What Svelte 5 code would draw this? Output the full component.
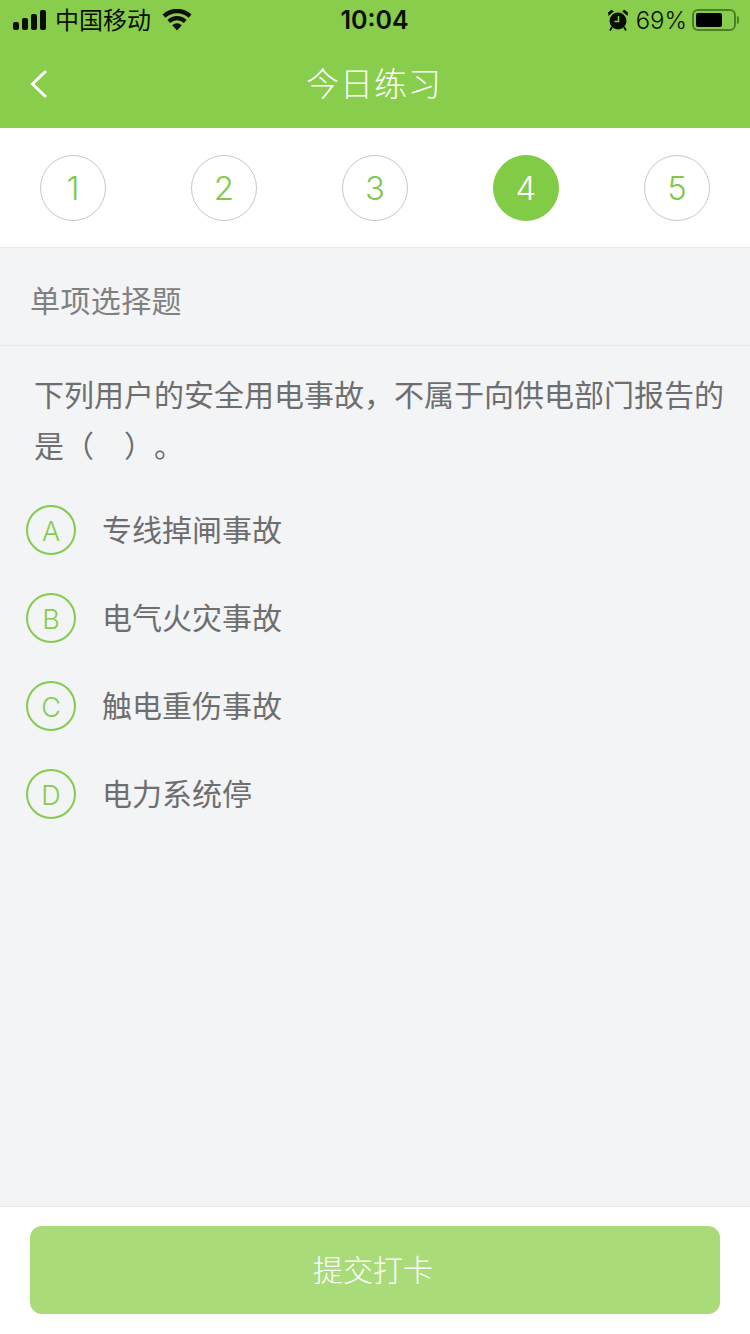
<script>
  const steps = [1, 2, 3, 4, 5];
  const current = 4;
  const options = [
    { key: "A", text: "专线掉闸事故" },
    { key: "B", text: "电气火灾事故" },
    { key: "C", text: "触电重伤事故" },
    { key: "D", text: "电力系统停" }
  ];
  const bars = [8, 12, 16, 20];
</script>

<div class="page">
  <header class="header">
    <div class="status">
      <div class="status-left">
        <div class="signal">
          {#each bars as h}
            <span style="height: {h}px"></span>
          {/each}
        </div>
        <span class="carrier">中国移动</span>
        <svg class="wifi" width="30" height="22" viewBox="0 0 30 22">
          <path d="M15 21.5 10.2 16.2a7 7 0 0 1 9.6 0Z" fill="#0a0f05" />
          <path d="M8.2 14 5.4 10.9a14 14 0 0 1 19.2 0L21.8 14a10 10 0 0 0-13.6 0Z" fill="#0a0f05" />
          <path d="M3.4 8.7 0.5 5.5a21.4 21.4 0 0 1 29 0l-2.9 3.2a17.2 17.2 0 0 0-23.2 0Z" fill="#0a0f05" />
        </svg>
      </div>
      <div class="time">10:04</div>
      <div class="status-right">
        <svg class="alarm" width="22" height="22" viewBox="0 0 22 22">
          <circle cx="11" cy="12" r="8.5" fill="#0a0f05" />
          <path d="M1.5 7 7 2.2 4.5 0.8 1 3.5Z M20.5 7 15 2.2 17.5 0.8 21 3.5Z" fill="#0a0f05" />
          <path d="M5 18 3 21.5M17 18l2 3.5" stroke="#0a0f05" stroke-width="1.8" />
          <path d="M11.5 7v5.5H7.5" stroke="#88cd4c" stroke-width="1.5" fill="none" />
        </svg>
        <span class="percent">69%</span>
        <div class="battery"><span class="level"></span></div>
        <span class="battery-tip"></span>
      </div>
    </div>
    <div class="navbar">
      <svg class="back" width="20" height="32" viewBox="0 0 20 32">
        <path d="M17 3 3.5 16 17 29" fill="none" stroke="#fff" stroke-width="3" />
      </svg>
      <h1>今日练习</h1>
    </div>
  </header>

  <nav class="steps">
    {#each steps as n}
      <div class="step" class:active={n === current}>{n}</div>
    {/each}
  </nav>

  <div class="type">单项选择题</div>

  <main class="body">
    <p class="question">下列用户的安全用电事故，不属于向供电部门报告的是（　）。</p>
    <ul class="options">
      {#each options as opt}
        <li>
          <span class="badge">{opt.key}</span>
          <span class="label">{opt.text}</span>
        </li>
      {/each}
    </ul>
  </main>

  <footer class="footer">
    <button class="submit">提交打卡</button>
  </footer>
</div>

<style>
  :global(body) {
    margin: 0;
  }

  .page {
    display: flex;
    flex-direction: column;
    height: 1334px;
    background: #f2f4f6;
    font-family: "Inter", "Noto Sans CJK SC", sans-serif;
    overflow: hidden;
  }

  .header {
    height: 128px;
    flex: none;
    background: #88cd4c;
  }

  .status {
    display: grid;
    grid-template-columns: 1fr auto 1fr;
    align-items: center;
    height: 40px;
    padding: 0 11px 0 13px;
    color: #0a0f05;
  }

  .status-left,
  .status-right {
    display: flex;
    align-items: center;
  }

  .status-right {
    justify-content: flex-end;
  }

  .signal {
    display: flex;
    align-items: flex-end;
    gap: 3px;
    height: 20px;
  }

  .signal span {
    width: 6px;
    border-radius: 2px;
    background: #0a0f05;
  }

  .carrier {
    margin: 0 0 3px 9px;
    font-size: 24px;
  }

  .wifi {
    margin-left: 11px;
  }

  .time {
    margin-right: 3px;
    font-size: 25px;
    font-weight: 600;
  }

  .alarm {
    margin-right: 7px;
  }

  .percent {
    margin-right: 5px;
    font-size: 24px;
    font-weight: 300;
  }

  .battery {
    box-sizing: border-box;
    width: 44px;
    height: 22px;
    padding: 2px;
    border: 2px solid #4d7f26;
    border-radius: 6px;
  }

  .level {
    display: block;
    width: 26px;
    height: 14px;
    border-radius: 2px;
    background: #000;
  }

  .battery-tip {
    width: 2px;
    height: 8px;
    margin-left: 1px;
    border-radius: 0 2px 2px 0;
    background: #4d7f26;
  }

  .navbar {
    position: relative;
    display: flex;
    align-items: center;
    justify-content: center;
    height: 88px;
  }

  .back {
    position: absolute;
    left: 29px;
    top: 28px;
  }

  h1 {
    margin: 0 0 4px -2px;
    color: #fff;
    font-size: 33px;
    font-weight: 300;
    letter-spacing: 1px;
  }

  .steps {
    display: flex;
    flex: none;
    justify-content: space-between;
    align-items: center;
    box-sizing: border-box;
    height: 120px;
    padding: 0 40px;
    background: #fff;
    border-bottom: 1px solid #e6e7e9;
  }

  .step {
    box-sizing: border-box;
    display: flex;
    align-items: center;
    justify-content: center;
    width: 66px;
    height: 66px;
    border: 1px solid #c9c9c9;
    border-radius: 50%;
    color: #82c84a;
    font-size: 33px;
    font-weight: 350;
  }

  .step.active {
    border-color: #82cb47;
    background: #82cb47;
    color: #fff;
  }

  .type {
    flex: none;
    box-sizing: border-box;
    height: 98px;
    padding-left: 30px;
    line-height: 106px;
    border-bottom: 1px solid #e6e8ea;
    color: #808080;
    font-size: 30px;
    letter-spacing: 0.4px;
  }

  .body {
    flex: 1;
    padding: 24px 0 0 26px;
  }

  .question {
    margin: 0;
    padding: 0 0 0 8px;
    color: #6e6e6e;
    font-size: 30px;
    line-height: 51px;
    text-spacing-trim: space-all;
  }

  .options {
    list-style: none;
    margin: 14px 0 0;
    padding: 0;
  }

  li {
    display: flex;
    align-items: center;
    height: 88px;
  }

  .badge {
    box-sizing: border-box;
    display: flex;
    align-items: center;
    justify-content: center;
    width: 50px;
    height: 50px;
    padding-top: 2px;
    border: 2px solid #85cc4d;
    border-radius: 50%;
    color: #85cc4d;
    font-size: 27px;
    font-weight: 350;
  }

  .label {
    margin: 0 0 4px 26px;
    color: #6e6e6e;
    font-size: 30px;
  }

  .footer {
    flex: none;
    box-sizing: border-box;
    height: 128px;
    padding: 19px 30px 0;
    background: #fff;
    border-top: 1px solid #e8e9eb;
  }

  .submit {
    display: block;
    width: 100%;
    height: 88px;
    padding: 0 4px 5px 0;
    border: 0;
    border-radius: 12px;
    background: #a9dc79;
    color: #fff;
    font-family: inherit;
    font-size: 30px;
    font-weight: 300;
  }
</style>
